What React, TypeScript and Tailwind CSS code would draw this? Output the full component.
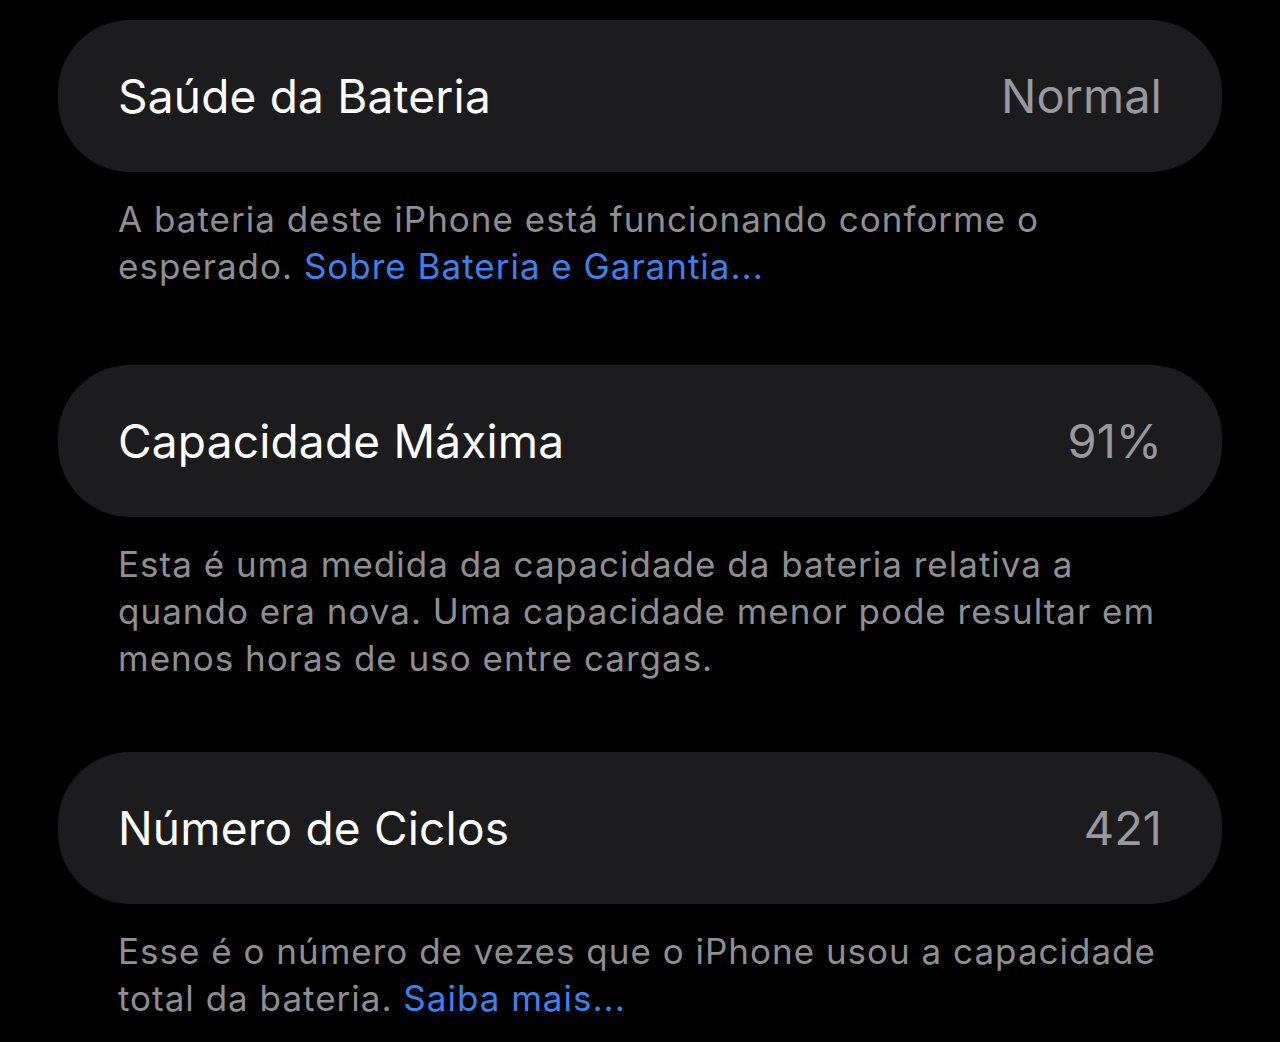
import React from "react"

type Row = {
  title: string
  value: string
  lines: React.ReactNode[]
}

const Link = ({ children }: { children: React.ReactNode }) => (
  <span className="text-[#3b82f0]">{children}</span>
)

const rows: Row[] = [
  {
    title: "Saúde da Bateria",
    value: "Normal",
    lines: [
      "A bateria deste iPhone está funcionando conforme o",
      <>
        esperado. <Link>Sobre Bateria e Garantia...</Link>
      </>,
    ],
  },
  {
    title: "Capacidade Máxima",
    value: "91%",
    lines: [
      "Esta é uma medida da capacidade da bateria relativa a",
      "quando era nova. Uma capacidade menor pode resultar em",
      "menos horas de uso entre cargas.",
    ],
  },
  {
    title: "Número de Ciclos",
    value: "421",
    lines: [
      "Esse é o número de vezes que o iPhone usou a capacidade",
      <>
        total da bateria. <Link>Saiba mais...</Link>
      </>,
    ],
  },
]

const Section = ({ row, mb }: { row: Row; mb: string }) => (
  <section className={mb}>
    <div className="h-[152px] rounded-[72px] bg-[#1c1c1e] flex items-center justify-between pl-[60px] pr-[60px]">
      <span className="text-white text-[46px] tracking-[0.2px]">{row.title}</span>
      <span className="text-[#98989f] text-[47px]">{row.value}</span>
    </div>
    <div className="mt-6 pl-[60px] text-[#8e8e93] text-[35px] leading-[47px] tracking-[1px]">
      {row.lines.map((l, i) => (
        <div key={i} className="whitespace-nowrap">
          {l}
        </div>
      ))}
    </div>
  </section>
)

export default function App() {
  return (
    <div
      className="w-[1280px] h-[1042px] bg-black overflow-hidden pt-5 px-[58px]"
      style={{ fontFamily: "Inter, 'Noto Sans', sans-serif" }}
    >
      <Section row={rows[0]} mb="mb-[75px]" />
      <Section row={rows[1]} mb="mb-[70px]" />
      <Section row={rows[2]} mb="" />
    </div>
  )
}
